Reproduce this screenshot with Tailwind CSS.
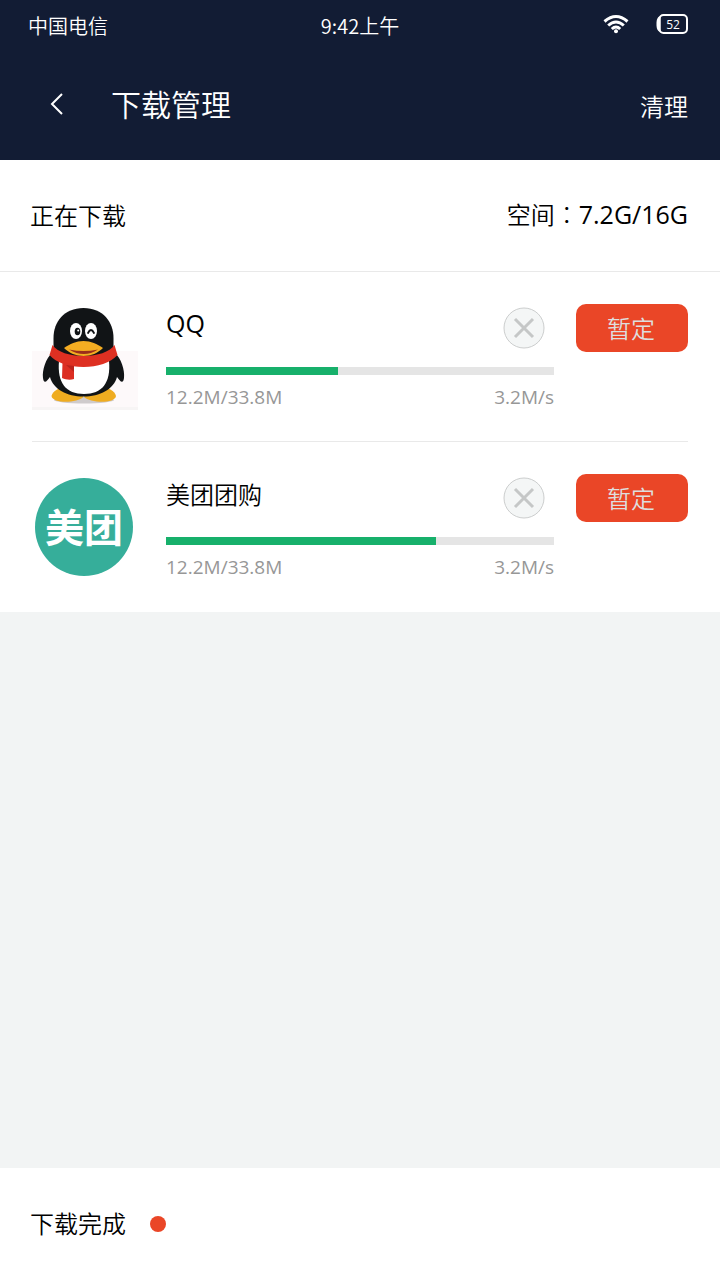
<!DOCTYPE html>
<html lang="zh-CN">
<head>
<meta charset="utf-8">
<meta name="viewport" content="width=device-width, initial-scale=1">
<title>下载管理</title>
<script src="https://cdn.jsdelivr.net/npm/@tailwindcss/browser@4"></script>
</head>
<body class="flex min-h-screen flex-col bg-[#f2f4f4] font-['Open_Sans','Noto_Sans_CJK_SC',sans-serif] text-2xl text-black">
  <header class="bg-[#121c34] text-white">
    <div class="grid h-12 grid-cols-3 items-center px-8 font-['Noto_Sans_CJK_SC',sans-serif] text-xl font-[350]">
      <span class="-ml-1 pt-1">中国电信</span>
      <time class="pt-1 text-center">9:42上午</time>
      <div class="flex items-center justify-end gap-[26px]">
        <svg class="h-5 w-7" viewBox="0 0 28 20" fill="none" stroke="#fff" stroke-width="3" role="img" aria-label="Wi-Fi">
          <path d="M2.500 7.500Q14-2.500 25.500 7.500M6.200 11.500Q14 4.500 21.800 11.500M9.800 15Q14 11 18.200 15"/>
          <circle cx="14" cy="17.200" r="2" fill="#fff" stroke="none"/>
        </svg>
        <svg class="h-5 w-8" viewBox="0 0 32 20" role="img" aria-label="电量 52%">
          <rect x="3.500" y="1" width="27.500" height="18" rx="4" fill="none" stroke="#fff" stroke-width="2"/>
          <path d="M4.500 2C1 3 .5 6 .5 10s.5 7 4 8Z" fill="#fff"/>
          <text x="17" y="14.500" text-anchor="middle" fill="#fff" font-family="Open Sans, sans-serif" font-size="12" font-weight="400">52</text>
        </svg>
      </div>
    </div>
    <div class="flex h-28 items-center pr-8 pl-11">
      <button type="button" aria-label="返回" class="flex h-10 w-6 items-center justify-center">
        <svg class="h-6 w-4" viewBox="0 0 16 24" fill="none" stroke="#fff" stroke-width="2"><path d="M14 2 4 12l10 10"/></svg>
      </button>
      <h1 class="ml-[43px] flex-1 pt-0.5 text-3xl font-[350]">下载管理</h1>
      <button type="button" class="pt-1.5 text-2xl font-[350]">清理</button>
    </div>
  </header>

  <main class="bg-white">
    <div class="flex h-28 items-center justify-between border-b border-[#e9e9e9] pr-8 pl-[30px]">
      <h2 class="font-[350]">正在下载</h2>
      <p class="pb-0.5 text-[25px]"><span class="text-2xl font-[350]">空间</span><span class="font-['Noto_Sans_CJK_TC',sans-serif] text-2xl font-light" lang="zh-TW">：</span>7.2G/16G</p>
    </div>
    <ul class="px-8">
      <li class="flex h-[170px] items-start border-b border-[#e9e9e9] pt-8">
        <svg class="h-[106px] w-[106px] shrink-0" viewBox="0 0 106 106" role="img" aria-label="QQ">
          <rect y="47" width="106" height="59" fill="#fdf9fa"/>
          <rect y="103" width="106" height="3" fill="#f7f5f5"/>
          <ellipse cx="52" cy="96" rx="30" ry="3.500" fill="#cfcbcc"/>
          <path d="M19.500 92c1-5 8-9 15-9s16 7 17 10c-6 6-31 7-32-1Z" fill="#efac20"/>
          <path d="M84 92c-1-5-8-9-15-9s-16 7-17 10c6 6 31 7 32-1Z" fill="#efac20"/>
          <path d="M20 49C14 54 10 66 11 74c1 7 4 3 7-1 3 12 17 19.500 33.500 19.500S82 85 85 73c3 4 6 8 7 1 1-8-3-20-9-25Z" fill="#111416"/>
          <path d="M51.500 4C32 4 21.500 18 21.500 34v17h60V34C81.500 18 71 4 51.500 4Z" fill="#111416"/>
          <path d="M27 57h50c2 22-7 33-25 33S25 79 27 57Z" fill="#fff"/>
          <ellipse cx="44" cy="27" rx="6" ry="8" fill="#fff"/>
          <ellipse cx="59" cy="27" rx="6" ry="8" fill="#fff"/>
          <ellipse cx="45.500" cy="27.500" rx="2.800" ry="3.800" fill="#111416"/>
          <circle cx="46.200" cy="26.500" r="1" fill="#fff"/>
          <path d="M56 29q3-6 6 0" fill="none" stroke="#111416" stroke-width="1.800" stroke-linecap="round"/>
          <path d="M20.500 41c5 7 17 11 31 11s26-4 31-11l3 10c-7 8-20 12-34 12S24 59 17.500 51Z" fill="#de3022"/>
          <path d="M32 44c6-4 12-7 19.500-7S65 40 71 44c-5 5-12 8-19.500 8S37 49 32 44Z" fill="#f4ad22"/>
          <path d="M37 45.500q14.500 3 29 0-14 9-29 0Z" fill="#9b2e1b"/>
          <path d="M30.500 58 42 61v14c-3 1-8 1-12-1Z" fill="#dc2e22"/>
          <path d="m34 61 8 7v-6Z" fill="#b9231c"/>
        </svg>
        <div class="ml-7 flex-1">
          <div class="flex h-12 items-center justify-between pr-[9px]">
            <h3 class="-mt-2 text-[25px]">QQ</h3>
            <button type="button" aria-label="取消下载 QQ">
              <svg class="size-[42px]" viewBox="0 0 42 42" fill="none"><circle cx="21" cy="21" r="20" fill="#f4f6f6" stroke="#cccece"/><path d="m12 12 18 18M30 12 12 30" stroke="#c5c7c7" stroke-width="3"/></svg>
            </button>
          </div>
          <div role="progressbar" aria-label="QQ 下载进度" aria-valuenow="44" aria-valuemin="0" aria-valuemax="100" class="mt-[15px] h-2 bg-[#e5e5e5]"><div class="h-full bg-[#17b06b]" style="width:44.300%"></div></div>
          <div class="mt-2.5 flex justify-between text-[19px] text-[#979797]"><span>12.2M/33.8M</span><span>3.2M/s</span></div>
        </div>
        <button type="button" class="ml-[22px] h-12 w-28 shrink-0 rounded-[10px] bg-[#ea4627] pt-0.5 pr-0.5 font-[350] text-[#dedede]">暂定</button>
      </li>
      <li class="flex h-[170px] items-start pt-8">
        <div class="flex h-[106px] w-[106px] shrink-0 items-center justify-center pr-0.5">
          <div class="flex size-[98px] items-center justify-center rounded-full bg-[#36ae9a] text-[39px] font-bold text-white" role="img" aria-label="美团">美团</div>
        </div>
        <div class="ml-7 flex-1">
          <div class="flex h-12 items-center justify-between pr-[9px]">
            <h3 class="-mt-1.5 font-[350]">美团团购</h3>
            <button type="button" aria-label="取消下载 美团团购">
              <svg class="size-[42px]" viewBox="0 0 42 42" fill="none"><circle cx="21" cy="21" r="20" fill="#f4f6f6" stroke="#cccece"/><path d="m12 12 18 18M30 12 12 30" stroke="#c5c7c7" stroke-width="3"/></svg>
            </button>
          </div>
          <div role="progressbar" aria-label="美团团购 下载进度" aria-valuenow="70" aria-valuemin="0" aria-valuemax="100" class="mt-[15px] h-2 bg-[#e5e5e5]"><div class="h-full bg-[#17b06b]" style="width:69.700%"></div></div>
          <div class="mt-2.5 flex justify-between text-[19px] text-[#979797]"><span>12.2M/33.8M</span><span>3.2M/s</span></div>
        </div>
        <button type="button" class="ml-[22px] h-12 w-28 shrink-0 rounded-[10px] bg-[#ea4627] pt-0.5 pr-0.5 font-[350] text-[#dedede]">暂定</button>
      </li>
    </ul>
  </main>

  <footer class="mt-auto flex h-28 items-center gap-6 bg-white px-[30px] font-[350]">
    <h2>下载完成</h2>
    <span class="size-4 rounded-full bg-[#ea4627]"></span>
  </footer>
</body>
</html>
